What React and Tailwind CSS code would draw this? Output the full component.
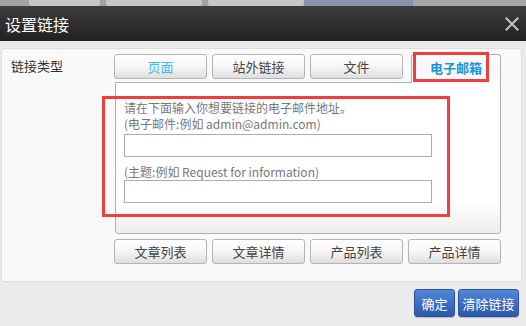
import React from 'react';

const font = { fontFamily: '"Noto Sans CJK SC", "Open Sans", sans-serif' };

const tabs = [
  { label: '页面', cls: 'text-[#3bbcf0]' },
  { label: '站外链接', cls: 'text-[#444]' },
  { label: '文件', cls: 'text-[#444]' },
];

const bottomBtns = ['文章列表', '文章详情', '产品列表', '产品详情'];

function GrayButton({ children, className = '' }) {
  return (
    <div
      className={`flex items-center justify-center h-[25px] rounded-[3px] border border-[#b4b4b4] bg-gradient-to-b from-[#ffffff] via-[#f6f6f6] to-[#dedede] text-[13px] leading-none ${className}`}
    >
      {children}
    </div>
  );
}

export default function App() {
  return (
    <div className="w-[526px] h-[326px] overflow-hidden bg-[#ebebeb] flex flex-col" style={font}>
      {/* strip of the page behind the dialog */}
      <div className="h-[6px] flex bg-[#a2a2a2]">
        <div className="w-[29px]" />
        <div className="w-[71px] bg-[#c6c6c6] rounded-b-[3px]" />
        <div className="w-[6px]" />
        <div className="w-[96px] bg-[#c6c6c6] rounded-b-[3px]" />
        <div className="w-[6px]" />
        <div className="w-[96px] bg-[#c6c6c6] rounded-b-[3px]" />
        <div className="w-[109px] bg-[#8893ae]" />
        <div className="flex-1 bg-[#a8a8a8]" />
      </div>

      {/* title bar */}
      <div className="h-[35px] flex items-center justify-between pl-[5px] pr-[7px] bg-gradient-to-b from-[#3d3d3d] to-[#222222]">
        <span className="text-white text-[16px] leading-none">设置链接</span>
        <svg width="14" height="14" viewBox="0 0 14 14" className="mt-[1px]">
          <path d="M1.5 1.5 L12.5 12.5 M12.5 1.5 L1.5 12.5" stroke="#bdbdbd" strokeWidth="2.2" strokeLinecap="square" />
        </svg>
      </div>

      {/* body */}
      <div className="flex-1 flex flex-col pt-[7px] pl-px pr-[4px]">
        <div className="h-[234px] flex bg-[#f9f9f9] border border-[#dedede] rounded-[3px]">
          <div className="w-[112px] pl-[9px] pt-[10px] text-[13px] leading-none text-[#333]">链接类型</div>

          <div className="w-[387px] flex flex-col pt-[5px]">
            {/* tabs */}
            <div className="relative grid grid-cols-4 gap-[5px] h-[28px] items-start">
              {tabs.map((t) => (
                <GrayButton key={t.label} className={t.cls}>
                  {t.label}
                </GrayButton>
              ))}
              <div className="relative z-10 h-[29px] ml-[3px] flex items-start justify-center pt-[6px] rounded-t-[3px] border border-b-0 border-[#aab3bd] bg-gradient-to-b from-[#ffffff] via-[#f4f5f6] to-[#ffffff] text-[13px] font-bold leading-none text-[#1a95d3]">
                电子邮箱
                {/* red highlight */}
                <div className="absolute left-[1px] right-[11px] -top-[3px] h-[30px] border-[3px] border-[#f23d3d]" />
              </div>
            </div>

            {/* tab panel */}
            <div className="relative ml-px h-[152px] border border-[#aab3bd] rounded-b-[3px] bg-gradient-to-b from-white from-[80%] to-[#ececec] pl-[8px] pt-[17px] text-[12px] text-[#777]">
              <div className="leading-[16px]">请在下面输入你想要链接的电子邮件地址。</div>
              <div className="leading-[16px]">(电子邮件:例如 admin@admin.com)</div>
              <div className="w-[308px] h-[23px] border border-[#acacac] bg-white mt-[2px]" />
              <div className="leading-[16px] mt-[7px]">(主题:例如 Request for information)</div>
              <div className="w-[308px] h-[23px] border border-[#acacac] bg-white" />
              {/* red highlight */}
              <div className="absolute -left-[14px] top-[13px] w-[348px] h-[121px] border-[3px] border-[#f23d3d]" />
            </div>

            {/* bottom buttons */}
            <div className="grid grid-cols-4 gap-[5px] mt-[5px]">
              {bottomBtns.map((b) => (
                <GrayButton key={b} className="text-[#444]">
                  {b}
                </GrayButton>
              ))}
            </div>
          </div>
        </div>

        {/* actions */}
        <div className="flex justify-end gap-[3px] pt-[7px] pr-[3px]">
          <div className="w-[41px] h-[28px] flex items-center justify-center rounded-[3px] border border-[#2d559f] bg-gradient-to-b from-[#5287d8] to-[#2b57ad] text-white text-[13px] leading-none shadow-[0_1px_1px_rgba(0,0,0,0.2)]">
            确定
          </div>
          <div className="w-[61px] h-[28px] flex items-center justify-center rounded-[3px] border border-[#2d559f] bg-gradient-to-b from-[#5287d8] to-[#2b57ad] text-white text-[13px] leading-none shadow-[0_1px_1px_rgba(0,0,0,0.2)]">
            清除链接
          </div>
        </div>
      </div>
    </div>
  );
}
